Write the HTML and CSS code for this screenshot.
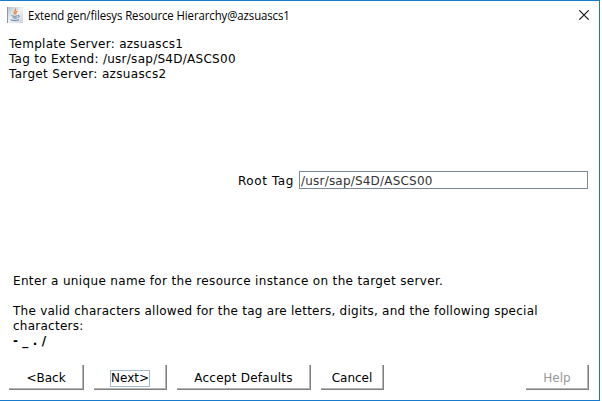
FILE: index.html
```html
<!DOCTYPE html>
<html lang="en">
<head>
<meta charset="utf-8">
<title>Extend gen/filesys Resource Hierarchy@azsuascs1</title>
<link rel="stylesheet" href="styles.css">
</head>
<body>
<div class="window">
  <header class="titlebar">
    <svg class="java" width="16" height="16" viewBox="0 0 16 16">
      <defs><linearGradient id="g" x1="0" y1="0" x2="1" y2="1"><stop offset="0" stop-color="#b4bfcb"/><stop offset=".5" stop-color="#f0f2f4"/><stop offset="1" stop-color="#cdd3da"/></linearGradient></defs>
      <rect width="16" height="16" fill="url(#g)"/>
      <path d="M.5 0V16" stroke="#8e9aa8"/>
      <path d="M8.500 1.500C10 3.500 5.500 4.500 7.500 7.500M10.500 4C8 5 8.500 6 9 7.500" fill="none" stroke="#e2813c" stroke-width="1.200"/>
      <path d="M4.500 8.500C6 9.500 9 9.500 10.500 8.700M5.500 10.700C7 11.200 9 11.200 10.300 10.700M11 8.500C13 8.300 12.500 10 11 10.500M3.500 12.500C3 13.500 10 13.800 12 12.700" fill="none" stroke="#557a9d"/>
    </svg>
    <h1 class="title">Extend gen/filesys Resource Hierarchy@azsuascs1</h1>
    <svg class="close" width="10" height="10" viewBox="0 0 10 10"><path d="M.3 .3L9.700 9.700M9.700 .3L.3 9.700" stroke="#111" stroke-width="1.150"/></svg>
  </header>
  <section class="summary">
    <p class="template">Template Server: azsuascs1</p>
    <p class="tag">Tag to Extend: /usr/sap/S4D/ASCS00</p>
    <p class="target">Target Server: azsuascs2</p>
  </section>
  <div class="field">
    <div class="label">Root Tag</div>
    <div class="input">/usr/sap/S4D/ASCS00</div>
  </div>
  <section class="description">
    <p class="enter">Enter a unique name for the resource instance on the target server.</p>
    <p class="valid">The valid characters allowed for the tag are letters, digits, and the following special</p>
    <p class="chars">characters:</p>
    <p class="special">- _ . /</p>
  </section>
  <footer class="buttons">
    <div class="button back"><span>&lt;Back</span></div>
    <div class="button next"><span class="focus">Next&gt;</span></div>
    <div class="button accept"><span>Accept Defaults</span></div>
    <div class="button cancel"><span>Cancel</span></div>
    <div class="button help"><span>Help</span></div>
  </footer>
</div>
</body>
</html>
```
FILE: styles.css
```css
* { box-sizing: border-box; }
body { margin: 0; background: #fff; overflow: hidden; }
p, h1 { margin: 0; font-weight: normal; white-space: nowrap; }
.window {
  width: 600px; height: 401px; display: flex; flex-direction: column;
  border: solid #1979ca; border-width: 1px 1px 1px 0;
  font: 12px/15px "DejaVu Sans", sans-serif; color: #000;
}
.titlebar { display: flex; flex: none; height: 30px; padding: 6px 10px 0 7px; }
.java { flex: none; }
.title { font: 12px/18px "Open Sans", "Noto Sans", sans-serif; margin-left: 5px; letter-spacing: -.1px; transform: scaleX(.95); transform-origin: left; }
.close { margin: 3px 0 0 auto; }
.summary { flex: none; padding: 6px 0 0 9px; height: 140px; }
.template, .tag { letter-spacing: .27px; }
.target { letter-spacing: .33px; }
.field { display: flex; flex: none; height: 18px; padding-right: 11px; }
.label { width: 299px; padding: 3px 5px 0 0; text-align: right; letter-spacing: .6px; }
.input { flex: 1; border: 1px solid #7a8a99; padding: 2px 1px 0; color: #333; letter-spacing: .2px; }
.description { flex: none; padding: 85px 0 0 13px; height: 176px; }
.enter { letter-spacing: .34px; }
.valid { letter-spacing: .25px; margin-top: 15px; }
.chars { letter-spacing: .25px; }
.special { letter-spacing: .1px; font-weight: bold; }
.buttons { display: flex; flex: none; height: 25px; padding: 0 10px 0 9px; }
.button {
  display: flex; align-items: center; justify-content: center; padding-top: 3px;
  border: solid #808080; border-width: 0 1px 1px 0; box-shadow: inset -1px -1px #b4b4b4;
}
.back { width: 75px; }
.next { width: 73px; margin-left: 10px; }
.accept { width: 134px; margin-left: 10px; letter-spacing: .25px; }
.cancel { width: 63px; margin-left: 10px; }
.help { width: 63px; margin-left: auto; color: #999; }
.focus { outline: 1px solid #a3b8cc; }
```
